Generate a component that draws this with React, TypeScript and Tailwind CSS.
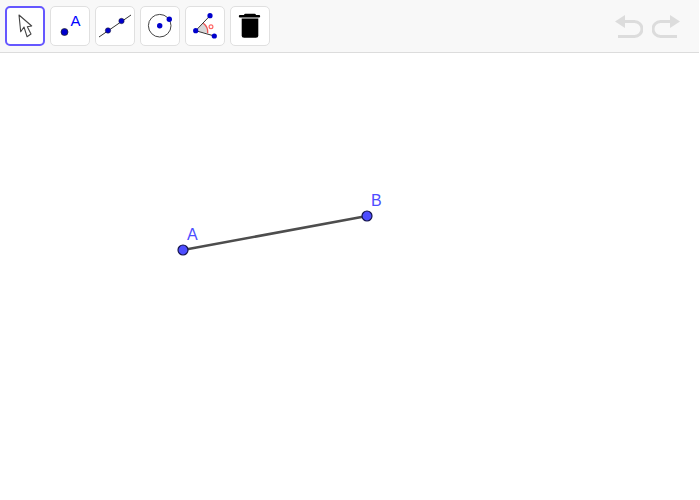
import React from 'react';

const ToolButton: React.FC<{ active?: boolean; children: React.ReactNode }> = ({ active, children }) => (
  <button
    className={
      active
        ? 'w-10 h-10 rounded-[5px] bg-white border-2 border-[#6557ff] flex items-center justify-center'
        : 'w-10 h-10 rounded-[5px] bg-white border border-[#e0e0e0] flex items-center justify-center'
    }
  >
    <svg width="40" height="40" viewBox="0 0 40 40" className="shrink-0">
      {children}
    </svg>
  </button>
);

const BLUE = '#0000cc';

export default function App() {
  return (
    <div className="w-[700px] h-[500px] bg-white overflow-hidden font-['Liberation_Sans',sans-serif]">
      <div className="w-[699px] h-[53px] bg-[#f8f8f8] border-b border-[#dcdcdc] flex items-start justify-between pl-[5px] pt-[6px]">
        <div className="flex gap-[5px]">
          <ToolButton active>
            <path d="M14 9 L26.7 20 L22.3 20.7 L26 28 L22 30.7 L19 21 L15.7 25.7 Z" fill="#fff" stroke="#444" strokeWidth="1.1" strokeLinejoin="round" />
          </ToolButton>
          <ToolButton>
            <circle cx="14.5" cy="26" r="3.5" fill={BLUE} stroke="#222" strokeWidth="0.7" />
            <text x="20.5" y="19.5" fontSize="15" fill="#0000ff" fontFamily="Liberation Sans">A</text>
          </ToolButton>
          <ToolButton>
            <line x1="4" y1="31" x2="36" y2="9" stroke="#333" strokeWidth="1" />
            <circle cx="13" cy="24.5" r="2.7" fill={BLUE} stroke="#222" strokeWidth="0.5" />
            <circle cx="26.5" cy="15" r="2.7" fill={BLUE} stroke="#222" strokeWidth="0.5" />
          </ToolButton>
          <ToolButton>
            <circle cx="19.7" cy="19.7" r="11.3" fill="none" stroke="#444" strokeWidth="1" />
            <circle cx="19.7" cy="19.7" r="2.7" fill={BLUE} />
            <circle cx="29.3" cy="13.3" r="2.7" fill={BLUE} />
          </ToolButton>
          <ToolButton>
            <path d="M10.7 24.7 L18.3 17.3 A 11 11 0 0 1 22.7 27.3 Z" fill="#d8d8d8" />
            <path d="M18.3 17.3 A 11 11 0 0 1 22.7 27.3" fill="none" stroke="#f05050" strokeWidth="1.3" />
            <line x1="10.7" y1="24.7" x2="25" y2="9.7" stroke="#333" strokeWidth="1" />
            <line x1="10.7" y1="24.7" x2="29.3" y2="30" stroke="#333" strokeWidth="1" />
            <circle cx="10.7" cy="24.7" r="2.6" fill={BLUE} />
            <circle cx="25" cy="9.7" r="2.6" fill={BLUE} />
            <circle cx="29.3" cy="30" r="2.6" fill={BLUE} />
            <circle cx="26" cy="20.7" r="1.9" fill="none" stroke="#ff6666" strokeWidth="1.2" />
          </ToolButton>
          <ToolButton>
            <path d="M14 9 a1.5 1.5 0 0 1 1.5 -1.2 h9 a1.5 1.5 0 0 1 1.5 1.2 h3 a0.9 0.9 0 0 1 0 2.4 h-19 a0.9 0.9 0 0 1 0 -2.4 Z" fill="#000" />
            <path d="M11.7 12.5 h16.6 v16.7 a2.5 2.5 0 0 1 -2.5 2.5 h-11.6 a2.5 2.5 0 0 1 -2.5 -2.5 Z" fill="#000" />
          </ToolButton>
        </div>
        <div className="flex gap-[9px] pr-[19px] pt-[8px]">
          <svg width="28" height="24" viewBox="0 0 28 24">
            <path d="M6 7.5 H19.5 A7.5 7.5 0 0 1 19.5 22.5 H3" fill="none" stroke="#dcdcdc" strokeWidth="3" />
            <path d="M0 7.5 L10 1 V14 Z" fill="#dcdcdc" />
          </svg>
          <svg width="28" height="24" viewBox="0 0 28 24">
            <path d="M22 7.5 H8.5 A7.5 7.5 0 0 0 8.5 22.5 H25" fill="none" stroke="#dcdcdc" strokeWidth="3" />
            <path d="M28 7.5 L18 1 V14 Z" fill="#dcdcdc" />
          </svg>
        </div>
      </div>
      <svg width="700" height="447" viewBox="0 53 700 447" className="block">
        <line x1="183" y1="250" x2="367" y2="216" stroke="#4d4d4d" strokeWidth="2.6" />
        <circle cx="183" cy="250" r="5" fill="#4d4dff" stroke="#14144d" strokeWidth="1.2" />
        <circle cx="367" cy="216" r="5" fill="#4d4dff" stroke="#14144d" strokeWidth="1.2" />
        <text x="187" y="240" fontSize="16" fill="#4d4dff" fontFamily="Liberation Sans">A</text>
        <text x="371" y="206" fontSize="16" fill="#4d4dff" fontFamily="Liberation Sans">B</text>
      </svg>
    </div>
  );
}
